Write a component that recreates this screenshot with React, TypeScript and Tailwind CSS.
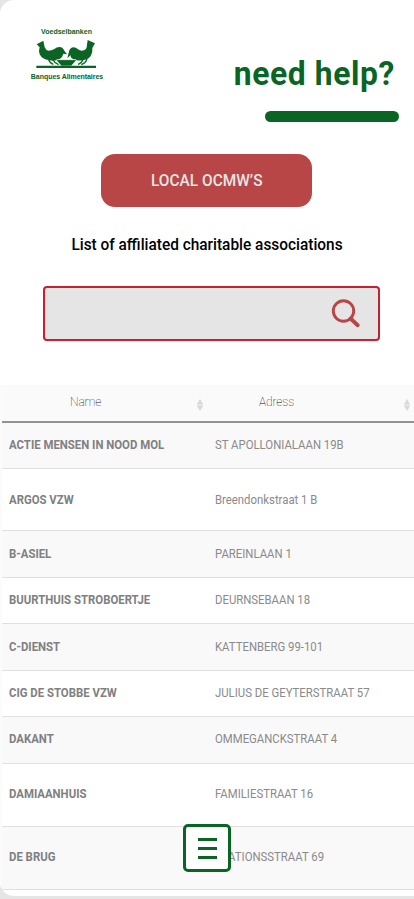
import React from 'react';

type Row = { name: string; address: string; size: string };

const rows: Row[] = [
  { name: 'ACTIE MENSEN IN NOOD MOL', address: 'ST APOLLONIALAAN 19B', size: 'h-[46px] pb-[2px] bg-[#f9f9f9]' },
  { name: 'ARGOS VZW', address: 'Breendonkstraat 1 B', size: 'h-[62px] bg-white' },
  { name: 'B-ASIEL', address: 'PAREINLAAN 1', size: 'h-[47px] bg-[#f9f9f9]' },
  { name: 'BUURTHUIS STROBOERTJE', address: 'DEURNSEBAAN 18', size: 'h-[46px] pb-[2px] bg-white' },
  { name: 'C-DIENST', address: 'KATTENBERG 99-101', size: 'h-[47px] bg-[#f9f9f9]' },
  { name: 'CIG DE STOBBE VZW', address: 'JULIUS DE GEYTERSTRAAT 57', size: 'h-[46px] pb-[2px] bg-white' },
  { name: 'DAKANT', address: 'OMMEGANCKSTRAAT 4', size: 'h-[47px] pb-[2px] bg-[#f9f9f9]' },
  { name: 'DAMIAANHUIS', address: 'FAMILIESTRAAT 16', size: 'h-[63px] pb-[2px] bg-white' },
  { name: 'DE BRUG', address: 'STATIONSSTRAAT 69', size: 'h-[63px] pb-[2px] bg-[#f9f9f9]' },
];

function Birds() {
  return (
    <svg width="60" height="30" viewBox="48 60 180 90" className="block" fill="#0a6424">
      <path d="M50 73 70 62 74 82Q77 91 86 92Q94 92 102 88Q110 81 119 81Q129 82 132 91L141 103 130 101Q128 112 119 117Q107 124 88 121Q66 118 59 103Q55 93 59 82Z" />
      <path d="M203 60 225 70 217 84Q219 98 212 108Q204 119 187 121Q169 124 158 116Q150 112 152 105L142 115 146 98Q148 84 160 82Q168 82 174 88Q182 94 192 91Q199 90 200 82Z" />
      <path d="M86 119Q90 130 100 133M99 119Q104 130 116 134M189 119Q184 130 174 133M201 117Q197 129 184 134" fill="none" stroke="#0a6424" strokeWidth="4" />
      <path d="M110 119h58v3l-14 16h-30l-14-16Z" stroke="#fff" strokeWidth="2" />
      <path d="M49 137.500h179v6.500H49z" />
    </svg>
  );
}

function Sorter() {
  return (
    <svg width="6" height="12" viewBox="0 0 6 12" fill="#d9d9d9">
      <path d="M3 0 6 5H0Zm0 12L0 7h6Z" />
      <path d="M0 5h6v2H0z" fill="#e6e6e6" />
    </svg>
  );
}

export default function App() {
  return (
    <div className="h-[899px] w-[414px] overflow-hidden bg-[#e5e5e5] font-[Roboto,sans-serif]">
      <main className="relative flex h-[896px] flex-col overflow-hidden rounded-l-[14px] bg-white">
        <header className="flex h-[154px] shrink-0 justify-between">
          <div className="ml-[27px] flex w-20 flex-col items-center pt-[27px] font-['Liberation_Sans',Arial,sans-serif] text-[7px] leading-[9px] font-bold text-[#0a6424]">
            <span className="mr-[1px] whitespace-nowrap">Voedselbanken</span>
            <div className="mt-[4px] mr-[2px]"><Birds /></div>
            <span className="mt-[2px] whitespace-nowrap tracking-[-0.05px]">Banques Alimentaires</span>
          </div>
          <div className="flex flex-col items-end pr-[15px] pt-[55px]">
            <h1 className="mr-1 origin-right scale-x-[0.965] text-[33px] leading-[38px] font-bold tracking-[0.6px] whitespace-nowrap text-[#0a6424]">need help?</h1>
            <div className="mt-[18px] h-[11px] w-[134px] rounded-full bg-[#0a6424]" />
          </div>
        </header>

        <button className="ml-[101px] h-[53px] w-[211px] shrink-0 rounded-[14px] bg-[#b94646] text-base font-medium text-[#e5e5e5]">
          <span className="inline-block scale-x-[0.965]">LOCAL OCMW’S</span>
        </button>
        <h2 className="mt-[26px] h-6 shrink-0 scale-x-[0.963] text-center text-base leading-6 font-medium text-black">
          List of affiliated charitable associations
        </h2>
        <div className="mt-[29px] ml-[43px] flex h-[55px] w-[337px] shrink-0 items-center justify-end rounded-[4px] border-2 border-[#c62033] bg-[#e5e5e5] pr-[17px]">
          <svg width="30" height="30" viewBox="0 0 30 30" fill="none" stroke="#b94646">
            <circle cx="12.500" cy="12" r="10.200" strokeWidth="2.900" />
            <path d="m19.500 19.500 7.200 6.700" strokeWidth="3.900" strokeLinecap="round" />
          </svg>
        </div>

        <section className="mt-[44px] border-l-2 border-[#fbfbfb] text-[#808080]">
          <div className="flex h-[38px] items-start border-b-2 border-[#929292] bg-[#fafafa] text-[12px] leading-[14px] font-thin tracking-[-0.1px] text-black">
            <div className="flex w-[206px] justify-between pt-[10px] pr-[5px] pl-[68px]">
              <span>Name</span>
              <div className="mt-1"><Sorter /></div>
            </div>
            <div className="flex w-[206px] justify-between pt-[10px] pr-[4px] pl-[51px]">
              <span>Adress</span>
              <div className="mt-1"><Sorter /></div>
            </div>
          </div>
          {rows.map((row) => (
            <div key={row.name} className={`flex items-center border-b border-[#e0e0e0] text-[12px] leading-[14px] whitespace-nowrap ${row.size}`}>
              <div className="w-[206px] pl-[7px] font-bold"><span className="inline-block origin-left scale-x-[0.948]">{row.name}</span></div>
              <div className="pl-[7px] text-[#8a8a8a]"><span className="inline-block origin-left scale-x-[0.946]">{row.address}</span></div>
            </div>
          ))}
        </section>

        <button aria-label="Menu" className="absolute top-[824px] left-[183px] flex h-12 w-12 flex-col items-center justify-center gap-[6px] rounded-[5px] border-3 border-[#0a6424] bg-white">
          <span className="h-[3px] w-[19px] bg-[#0a6424]" />
          <span className="h-[3px] w-[19px] bg-[#0a6424]" />
          <span className="h-[3px] w-[19px] bg-[#0a6424]" />
        </button>
      </main>
    </div>
  );
}
